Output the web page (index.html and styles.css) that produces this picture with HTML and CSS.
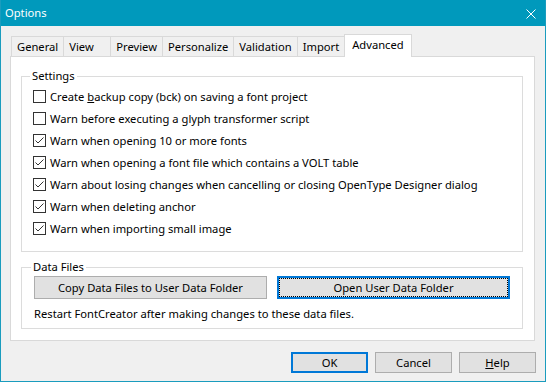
FILE: index.html
```html
<!DOCTYPE html>
<html lang="en">
<head>
    <meta charset="UTF-8">
    <title>Options</title>
    <link rel="stylesheet" href="styles.css">
</head>
<body>
    <div class="window">
        <div class="titlebar">
            <span class="title">Options</span>
            <svg class="close" width="10" height="10" viewBox="0 0 10 10">
                <path d="M0.5 0.5 L9.5 9.5 M9.5 0.5 L0.5 9.5" stroke="#fff" stroke-width="1" fill="none"/>
            </svg>
        </div>

        <div class="content">
            <div class="tabs">
                <div class="tab">General</div>
                <div class="tab">View</div>
                <div class="tab">Preview</div>
                <div class="tab">Personalize</div>
                <div class="tab">Validation</div>
                <div class="tab">Import</div>
                <div class="tab active">Advanced</div>
            </div>

            <div class="panel">
                <fieldset class="group settings">
                    <legend>Settings</legend>
                    <label class="check"><span class="box"></span><span>Create <u>b</u>ackup copy (bck) on saving a font project</span></label>
                    <label class="check"><span class="box"></span><span>Warn before executing a glyph transformer script</span></label>
                    <label class="check"><span class="box checked"></span><span>Warn when opening 10 or more fonts</span></label>
                    <label class="check"><span class="box checked"></span><span>Warn when opening a font file which contains a VOLT table</span></label>
                    <label class="check"><span class="box checked"></span><span>Warn about losing changes when cancelling or closing OpenType Designer dialog</span></label>
                    <label class="check"><span class="box checked"></span><span>Warn when deleting anchor</span></label>
                    <label class="check"><span class="box checked"></span><span>Warn when importing small image</span></label>
                </fieldset>

                <fieldset class="group data-files">
                    <legend>Data Files</legend>
                    <div class="data-buttons">
                        <button class="btn">Copy Data Files to User Data Folder</button>
                        <button class="btn focused">Open User Data Folder</button>
                    </div>
                    <p class="note">Restart FontCreator after making changes to these data files.</p>
                </fieldset>
            </div>

            <div class="footer">
                <button class="btn default">OK</button>
                <button class="btn">Cancel</button>
                <button class="btn"><u>H</u>elp</button>
            </div>
        </div>
    </div>
</body>
</html>
```
FILE: styles.css
```css
* {
    box-sizing: border-box;
}

body {
    margin: 0;
    font-family: "Noto Sans", sans-serif;
    font-size: 11.2px;
    color: #000;
    background: #f0f0f0;
}

.window {
    width: 546px;
    height: 382px;
    border: 1px solid #1a9cbe;
    border-top: 0;
    background: #f0f0f0;
}

.titlebar {
    height: 26px;
    background: #0099bc;
    color: #fff;
    display: flex;
    align-items: center;
    justify-content: space-between;
    padding: 0 9px 0 4px;
}

.title {
    line-height: 14px;
}

.close {
    display: block;
    margin-top: 1px;
}

.content {
    padding: 8px 10px 0 9px;
}

/* tabs */
.tabs {
    display: flex;
    align-items: flex-end;
    height: 22px;
    padding-left: 1px;
}

.tab {
    height: 20px;
    min-width: 48px;
    padding: 0 5px;
    line-height: 19px;
    border: 1px solid #d9d9d9;
    border-bottom: 0;
    margin-right: -1px;
    background: #f0f0f0;
    white-space: nowrap;
}

.tab.active {
    position: relative;
    z-index: 1;
    height: 23px;
    margin-bottom: -1px;
    padding: 0 7px;
    line-height: 19px;
    background: #fff;
}

.panel {
    height: 285px;
    background: #fff;
    border: 1px solid #d9d9d9;
    padding: 12px 11px 0 10px;
}

/* group boxes */
.group {
    margin: 0;
    border: 1px solid #dcdcdc;
    padding: 2px 11px 12px 11px;
    min-width: 0;
}

.group legend {
    padding: 0 2px;
    margin-left: -3px;
    line-height: 14px;
}

.check {
    display: flex;
    align-items: center;
    gap: 4px;
    height: 22px;
    white-space: nowrap;
}

.box {
    width: 13px;
    height: 13px;
    border: 1px solid #333;
    background: #fff;
    flex: none;
}

.box.checked {
    background: #fff url("data:image/svg+xml,%3Csvg xmlns='http://www.w3.org/2000/svg' width='11' height='11'%3E%3Cpath d='M1.5 5.5 L4 8 L9.5 2.5' stroke='%23333' stroke-width='1' fill='none'/%3E%3C/svg%3E") no-repeat center;
}

.data-files {
    margin-top: 8px;
    padding: 2px 12px 7px 12px;
}

.data-buttons {
    display: grid;
    grid-template-columns: 1fr 1fr;
    gap: 10px;
}

.btn {
    font-family: inherit;
    font-size: inherit;
    color: #000;
    background: #e1e1e1;
    border: 1px solid #adadad;
    border-radius: 0;
    padding: 0;
    height: 23px;
    line-height: 20px;
}

.btn.focused {
    border: 2px solid #0078d7;
    outline: 1px dotted #000;
    outline-offset: -3px;
}

.note {
    margin: 8px 0 0 0;
    line-height: 14px;
}

.footer {
    display: flex;
    justify-content: flex-end;
    gap: 7px;
    padding-top: 11px;
    margin-right: -1px;
}

.footer .btn {
    width: 77px;
    height: 21px;
    line-height: 18px;
}

.btn.default {
    border: 2px solid #0078d7;
}
```
